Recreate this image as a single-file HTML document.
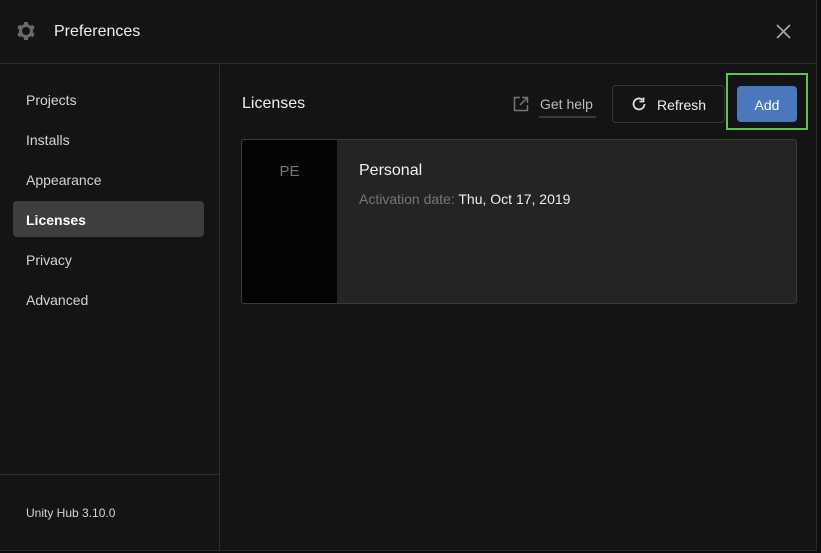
<!DOCTYPE html>
<html><head><meta charset="utf-8"><style>
*{margin:0;padding:0;box-sizing:border-box}
body{width:821px;height:553px;background:#0c0c0c;font-family:"Liberation Sans",sans-serif;overflow:hidden;position:relative}
.win{position:absolute;left:0;top:0;width:817px;height:551px;background:#141414;border-right:1px solid #2a2a2a;border-bottom:1px solid #2a2a2a}
.hdr{position:absolute;left:0;top:0;width:817px;height:64px;border-bottom:1px solid #2e2e2e}
.title{position:absolute;left:54px;top:22px;color:#eee;font-size:16px}
.side{position:absolute;left:0;top:65px;width:220px;height:486px;border-right:1px solid #2e2e2e}
.item{position:absolute;left:26px;color:#d4d4d4;font-size:14px}
.sel{position:absolute;left:13px;top:136px;width:191px;height:36px;background:#3e3e3e;border-radius:4px}
.ver{position:absolute;left:26px;top:441px;color:#d4d4d4;font-size:12px}
.sep{position:absolute;left:0;top:409px;width:220px;border-top:1px solid #2e2e2e}
</style></head><body>
<div class="win">
<div class="hdr">
<svg style="position:absolute;left:16px;top:21px" width="20" height="20" viewBox="0 0 20 20"><g fill="#6a6a6a"><circle cx="10" cy="10" r="7"/><rect x="8" y="1" width="4" height="4"/><rect x="8" y="15" width="4" height="4"/><rect x="8" y="1" width="4" height="4" transform="rotate(60 10 10)"/><rect x="8" y="15" width="4" height="4" transform="rotate(60 10 10)"/><rect x="8" y="1" width="4" height="4" transform="rotate(120 10 10)"/><rect x="8" y="15" width="4" height="4" transform="rotate(120 10 10)"/></g><circle cx="10" cy="10" r="4" fill="#141414"/></svg>
<div class="title" style="top:23px">Preferences</div>
<svg style="position:absolute;left:776px;top:24px" width="15" height="15" viewBox="0 0 15 15"><path d="M1 1L14 14M14 1L1 14" stroke="#aaa" stroke-width="1.6"/></svg>
</div>
<div class="side">
<div class="sel"></div>
<div class="item" style="top:27px">Projects</div>
<div class="item" style="top:67px">Installs</div>
<div class="item" style="top:107px">Appearance</div>
<div class="item" style="top:147px;color:#fff;font-weight:bold">Licenses</div>
<div class="item" style="top:187px">Privacy</div>
<div class="item" style="top:227px">Advanced</div>
<div class="sep"></div>
<div class="ver">Unity Hub 3.10.0</div>
</div>
<div style="position:absolute;left:242px;top:95px;color:#eee;font-size:16px">Licenses</div>
<svg style="position:absolute;left:513px;top:96px" width="16" height="16" viewBox="0 0 16 16" fill="none" stroke="#777" stroke-width="1.5"><path d="M7 1.5H1.5v13h13V9M9 1.5h5.5V7M14.5 1.5L7 9"/></svg>
<div style="position:absolute;left:540px;top:96px;color:#bbb;font-size:14px">Get help</div>
<div style="position:absolute;left:539px;top:116px;width:57px;border-top:2px solid #3a3a3a"></div>
<div style="position:absolute;left:612px;top:85px;width:113px;height:38px;border:1px solid #363636;border-radius:4px"></div>
<svg style="position:absolute;left:631px;top:96px" width="16" height="16" viewBox="0 0 16 16" fill="none" stroke="#ddd" stroke-width="1.8"><path d="M13.5 8A5.5 5.5 0 1 1 11.5 3.7"/><path d="M12.5 1.5v4h-4" fill="none"/></svg>
<div style="position:absolute;left:657px;top:97px;color:#eee;font-size:14px">Refresh</div>
<div style="position:absolute;left:726px;top:73px;width:82px;height:57px;border:2px solid #5fc44e"></div>
<div style="position:absolute;left:737px;top:86px;width:60px;height:36px;background:#4b77bd;border-radius:4px;color:#fff;font-size:14px;text-align:center;line-height:38px">Add</div>
<div style="position:absolute;left:241px;top:139px;width:556px;height:165px;background:#242424;border:1px solid #3a3a3a;border-radius:3px;overflow:hidden">
<div style="position:absolute;left:0;top:0;width:95px;height:165px;background:#040404;color:#777;font-size:15px;text-align:center;padding-top:23px">PE</div>
<div style="position:absolute;left:117px;top:22px;color:#f0f0f0;font-size:16px">Personal</div>
<div style="position:absolute;left:117px;top:51px;color:#777;font-size:14px">Activation date: <span style="color:#eee">Thu, Oct 17, 2019</span></div>
</div>
</div>
</body></html>
